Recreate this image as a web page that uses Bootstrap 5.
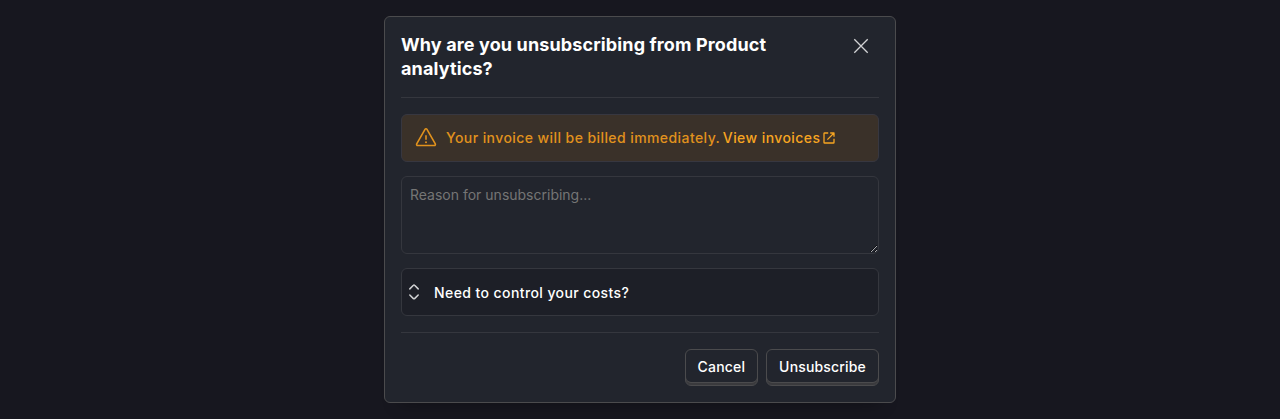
<!DOCTYPE html>
<html lang="en" data-bs-theme="dark">
<head>
<meta charset="utf-8">
<meta name="viewport" content="width=device-width, initial-scale=1">
<title>Unsubscribe</title>
<link href="https://cdn.jsdelivr.net/npm/bootstrap@5.3.0/dist/css/bootstrap.min.css" rel="stylesheet">
<style>
body { background: #17171f; color: #fff; font-family: Inter, sans-serif; font-size: 14px; line-height: 20px; min-height: 100vh; overflow: hidden; }
.dialog-panel { width: 512px; background: #22252d; border: 1px solid #4b4b4d; border-radius: 6px; box-shadow: 0 16px 16px -16px rgba(0,0,0,.35); }
.dialog-title { font-size: 18px; line-height: 24px; font-weight: 700; letter-spacing: .13px; width: 415px; }
.rule-b { border-bottom: 1px solid #35373e; }
.rule-t { border-top: 1px solid #35373e; }
.close-btn { width: 20px; height: 20px; margin: 3px 8px 0 0; color: #d2d3d5; line-height: 0; }
.dialog-body { padding: 16px 0; gap: 14px; }
.notice { height: 48px; padding: 0 12px; background: #3a3129; border: 1px solid #373740; border-radius: 6px; color: #e1921d; font-weight: 500; letter-spacing: .42px; }
.notice a { color: #f7a521; gap: 2.6px; margin-left: 2.6px; }
.reason { display: block; height: 78px; padding: 8px; background: #22252d; border: 1px solid #35373e; border-radius: 6px; font-size: 14px; line-height: 20px; color: #fff; resize: vertical; }
.reason::placeholder { color: #757575; opacity: 1; }
.costs { height: 48px; padding: 0 4px; gap: 12px; background: #1d1f27; border: 1px solid #35373e; border-radius: 6px; font-weight: 500; color: #fff; letter-spacing: .41px; }
.costs span { padding-top: 2px; }
.key-btn { height: 37px; padding: 0 12px 2px; border: 1px solid #4b4b4d; border-radius: 6px; background: #22252d; box-shadow: inset 0 -2px #3a3a3d, inset 0 -3px #4b4b4d; font-size: 14px; line-height: 20px; font-weight: 500; letter-spacing: .17px; color: #fff; }
</style>
</head>
<body>
<main class="dialog-panel mx-auto mt-3 px-3">
  <header class="d-flex justify-content-between align-items-start pt-3 pb-3 rule-b">
    <h1 class="dialog-title m-0">Why are you unsubscribing from Product analytics?</h1>
    <button type="button" class="close-btn btn p-0 border-0" aria-label="Close">
      <svg width="20" height="20" viewBox="0 0 20 20" fill="none" stroke="currentColor" stroke-width="1.3"><path d="M3.3 3.3l13.4 13.4M16.7 3.3L3.3 16.7"/></svg>
    </button>
  </header>
  <section class="dialog-body d-flex flex-column">
    <div class="notice d-flex align-items-center">
      <svg class="flex-shrink-0 me-2" width="24" height="24" viewBox="0 0 24 24" fill="none" stroke="currentColor" stroke-width="1.6" stroke-linejoin="round"><path d="M11 3.3a1.15 1.15 0 0 1 2 0l8.3 14.6a1.1 1.1 0 0 1-.97 1.6H3.67a1.1 1.1 0 0 1-.97-1.6z"/><path d="M12 9.2v4.5"/><circle cx="12" cy="16.2" r="1" fill="currentColor" stroke="none"/></svg>
      <span>Your invoice will be billed immediately.</span>
      <a href="#" class="text-decoration-none d-inline-flex align-items-center"><span>View invoices</span><svg width="12" height="12" viewBox="0 0 12 12" fill="none" stroke="currentColor" stroke-width="1.3" stroke-linejoin="round"><path d="M5.2 1H1.6a.6.6 0 0 0-.6.6v8.8c0 .3.3.6.6.6h8.8c.3 0 .6-.3.6-.6V6.8M7.2 1H11v3.8M11 1L4.4 7.6"/></svg></a>
    </div>
    <textarea class="reason w-100" placeholder="Reason for unsubscribing..."></textarea>
    <button type="button" class="costs d-flex align-items-center w-100 text-start">
      <svg width="16" height="20" viewBox="0 0 16 20" fill="none" stroke="#d2d3d5" stroke-width="1.5" stroke-linecap="round" stroke-linejoin="round"><path d="M3.8 6.9L7.4 3.3a.8.8 0 0 1 1.2 0l3.6 3.6M3.8 13L7.4 16.6a.8.8 0 0 0 1.2 0l3.6-3.6"/></svg>
      <span>Need to control your costs?</span>
    </button>
  </section>
  <footer class="rule-t d-flex justify-content-end gap-2 py-3">
    <button type="button" class="key-btn">Cancel</button>
    <button type="button" class="key-btn">Unsubscribe</button>
  </footer>
</main>
<script src="https://cdn.jsdelivr.net/npm/bootstrap@5.3.0/dist/js/bootstrap.bundle.min.js"></script>
</body>
</html>
